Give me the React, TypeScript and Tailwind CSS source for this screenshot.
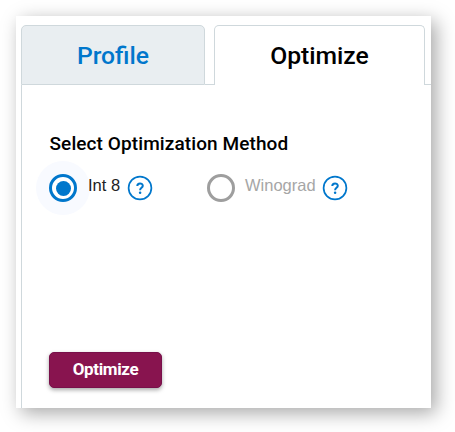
import React from "react";

function HelpIcon() {
  return (
    <svg className="block h-[26px] w-[26px] shrink-0" viewBox="0 0 26 26" fill="none" stroke="#0077cc" aria-label="Help">
      <circle cx="13" cy="13" r="11.4" strokeWidth="1.7" />
      <path d="M10.3 10.9C10.3 7.6 15.8 7.6 15.8 10.8C15.8 12.8 13.1 12.9 13.1 15.2" strokeWidth="2" />
      <circle cx="13.1" cy="17.8" r="1.25" fill="#0077cc" stroke="none" />
    </svg>
  );
}

function Radio({ checked = false }: { checked?: boolean }) {
  return (
    <span
      className={`flex size-[54px] shrink-0 items-center justify-center rounded-full ${checked ? "bg-[#f8faff]" : ""}`}
    >
      <span
        className={`flex size-7 items-center justify-center rounded-full border-3 ${
          checked ? "border-[#0077cc] bg-white" : "border-[#9e9e9e]"
        }`}
      >
        {checked && <span className="size-[15px] rounded-full bg-[#0077cc]" />}
      </span>
    </span>
  );
}

export default function App() {
  return (
    <div className="h-[432px] w-[455px] overflow-hidden bg-white pt-4 pl-4 font-[Roboto,sans-serif]">
      <div className="flex h-[392px] w-[415px] flex-col bg-white pt-[9px] pl-[5px] shadow-[5px_5px_18px_rgba(0,0,0,0.35)]">
        <div className="flex h-[60px] shrink-0 text-[24.7px] leading-[60px] font-medium" role="tablist">
          <div className="w-[184px] rounded-t-[5px] border border-[#cfd8dc] bg-[#e9eef1] text-center text-[#0077cc]" role="tab">
            Profile
          </div>
          <div className="w-[9px] border-b border-[#cfd8dc]" />
          <div className="w-[211px] rounded-t-[5px] border border-b-0 border-[#cfd8dc] text-center text-black" role="tab">
            Optimize
          </div>
          <div className="flex-1 border-b border-[#cfd8dc]" />
        </div>
        <div className="flex flex-1 flex-col border-l border-[#cfd8dc] pt-[47px]">
          <h2 className="pl-[27.5px] text-[19px] leading-6 font-medium tracking-[0.1px] text-black">
            Select Optimization Method
          </h2>
          <div className="mt-[5px] flex h-[54px] items-center pl-[14px] font-['Liberation_Sans',Arial,sans-serif] text-[16.5px]">
            <Radio checked />
            <span className="-mt-1.5 ml-[-2px] w-[38.5px] whitespace-nowrap text-[#222]">Int 8</span>
            <HelpIcon />
            <span className="w-[41px]" />
            <Radio />
            <span className="-mt-1.5 ml-[-2.5px] w-[77px] whitespace-nowrap text-[#a6a6a6]">Winograd</span>
            <HelpIcon />
          </div>
          <button className="mt-[137px] ml-[27px] h-9 w-[113px] rounded-[5px] border border-[#78104a] bg-[#88144f] pb-[2px] text-[17px] leading-none font-bold tracking-[-0.35px] text-white shadow-[0_2px_4px_rgba(0,0,0,0.35)]">
            Optimize
          </button>
        </div>
      </div>
    </div>
  );
}
